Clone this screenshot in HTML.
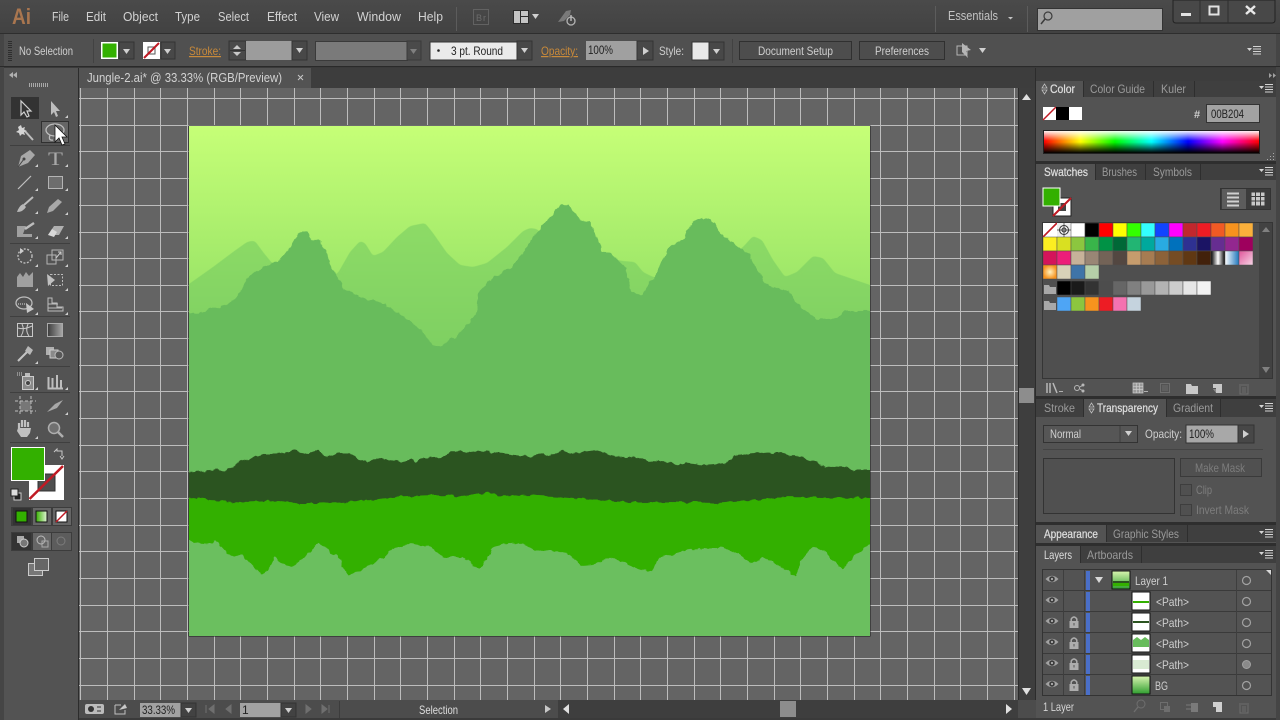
<!DOCTYPE html>
<html><head><meta charset="utf-8"><title>Illustrator</title>
<style>
html,body{margin:0;padding:0;width:1280px;height:720px;overflow:hidden;background:#535353}
svg{display:block;position:absolute;left:0;top:0}
text{font-family:"Liberation Sans",sans-serif;font-size:12px;fill:#cfcfcf}
.m{font-size:13px;fill:#d2d2d2}
.o{fill:#c98a3a;text-decoration:underline dotted}
.d{fill:#7d7d7d}
.k{fill:#222}
.i{fill:#9a9a9a}
.b{fill:#dedede;stroke:#dedede;stroke-width:.25}
.ic{fill:none;stroke:#bdbdbd;stroke-width:1.3}
.is{fill:#a8a8a8}
</style></head><body>
<svg width="1280" height="720" viewBox="0 0 1280 720" xmlns="http://www.w3.org/2000/svg">
<defs>
<clipPath id="ab"><rect x="189" y="126" width="681" height="510"/></clipPath>
<filter id="soft" x="170" y="100" width="730" height="560" filterUnits="userSpaceOnUse" color-interpolation-filters="sRGB"><feGaussianBlur stdDeviation="1.8"/><feComponentTransfer><feFuncA type="linear" slope="5" intercept="-2"/></feComponentTransfer><feGaussianBlur stdDeviation=".3"/></filter>
<filter id="rough" x="170" y="100" width="730" height="560" filterUnits="userSpaceOnUse" color-interpolation-filters="sRGB"><feGaussianBlur stdDeviation="1" result="b"/><feComponentTransfer in="b" result="g"><feFuncA type="linear" slope="5" intercept="-2"/></feComponentTransfer><feTurbulence type="fractalNoise" baseFrequency=".14" numOctaves="2" seed="4" result="n"/><feDisplacementMap in="g" in2="n" scale="5" xChannelSelector="R" yChannelSelector="G"/><feGaussianBlur stdDeviation=".35"/></filter>
<linearGradient id="sky" x1="0" y1="0" x2="0" y2="1"><stop offset="0" stop-color="#c6ff77"/><stop offset="1" stop-color="#8cdc62"/></linearGradient>
<linearGradient id="far" x1="0" y1="0" x2="0" y2="1"><stop offset="0" stop-color="#8ddb66"/><stop offset="1" stop-color="#78cb60"/></linearGradient>
<linearGradient id="hue" x1="0" y1="0" x2="1" y2="0"><stop offset="0" stop-color="#f00"/><stop offset=".17" stop-color="#ff0"/><stop offset=".33" stop-color="#0f0"/><stop offset=".5" stop-color="#0ff"/><stop offset=".67" stop-color="#00f"/><stop offset=".83" stop-color="#f0f"/><stop offset="1" stop-color="#f00"/></linearGradient>
<linearGradient id="lum" x1="0" y1="0" x2="0" y2="1"><stop offset="0" stop-color="#fff" stop-opacity=".95"/><stop offset=".45" stop-color="#fff" stop-opacity="0"/><stop offset=".5" stop-color="#000" stop-opacity="0"/><stop offset="1" stop-color="#000" stop-opacity="1"/></linearGradient>
<linearGradient id="top" x1="0" y1="0" x2="0" y2="1"><stop offset="0" stop-color="#4a4a4a"/><stop offset="1" stop-color="#424242"/></linearGradient>
<linearGradient id="bw" x1="0" y1="0" x2="1" y2="0"><stop offset="0" stop-color="#000"/><stop offset=".5" stop-color="#fff"/><stop offset="1" stop-color="#000"/></linearGradient>
<linearGradient id="bl" x1="0" y1="0" x2="1" y2="0"><stop offset="0" stop-color="#fff"/><stop offset="1" stop-color="#1d75bc"/></linearGradient>
<linearGradient id="pk" x1="0" y1="0" x2="1" y2="1"><stop offset="0" stop-color="#e0559a"/><stop offset="1" stop-color="#f6d6e6"/></linearGradient>
<linearGradient id="gr" x1="0" y1="0" x2="0" y2="1"><stop offset="0" stop-color="#d9f5b0"/><stop offset="1" stop-color="#2f9e2f"/></linearGradient>
<linearGradient id="gg" x1="0" y1="0" x2="1" y2="0"><stop offset="0" stop-color="#36b000"/><stop offset="1" stop-color="#e4f5d8"/></linearGradient>
<linearGradient id="gy" x1="0" y1="0" x2="1" y2="0"><stop offset="0" stop-color="#3c3c3c"/><stop offset="1" stop-color="#a8a8a8"/></linearGradient>
<radialGradient id="org"><stop offset="0" stop-color="#fff2c0"/><stop offset="1" stop-color="#f7931e"/></radialGradient>
<path id="tri" d="M0 3 L3 3 L3 0 Z" fill="#cfcfcf"/>
<path id="dn" d="M0 0 H7 L3.5 5 Z" fill="#d0d0d0"/>
<path id="menu" d="M0 3 H5 L2.5 6 Z M6 1 H14 V2 H6 Z M6 3.5 H14 V4.5 H6 Z M6 6 H14 V7 H6 Z M6 8.5 H14 V9.5 H6 Z" fill="#d4d4d4" transform="translate(0,-1)"/>
<g id="eye"><path d="M-6.500 0 Q0 -6.500 6.500 0 Q0 6.500 -6.500 0 Z" fill="#a2a2a2"/><circle r="2.800" fill="#3d3d3d"/><circle r="1" fill="#c4c4c4"/></g>
<g id="lock"><path d="M-2.800 -1 V-3 Q0 -7 2.800 -3 V-1" fill="none" stroke="#adadad" stroke-width="1.500"/><rect x="-4.500" y="-1" width="9" height="7" fill="#adadad"/><rect x="-.5" y="1" width="1" height="2.500" fill="#555"/></g>
<circle id="tgt" r="4" fill="none" stroke="#a2a2a2" stroke-width="1.2"/>
</defs>

<!-- base -->
<rect width="1280" height="720" fill="#535353"/>
<rect width="1280" height="33" fill="url(#top)"/>
<rect y="33" width="1280" height="1" fill="#2e2e2e"/>
<rect x="4" y="34" width="1272" height="32" fill="#505050"/>
<rect y="34" width="4" height="686" fill="#454545"/>
<rect x="1276" y="34" width="4" height="686" fill="#454545"/>
<rect x="0" y="66" width="1280" height="1" fill="#2a2a2a"/>
<rect x="4" y="67" width="1272" height="1" fill="#3a3a3a"/>

<!-- menu bar -->
<text x="12" y="24" textLength="19" lengthAdjust="spacingAndGlyphs" style="font-size:22px;font-weight:bold;fill:#a9764f">Ai</text>
<text class="m" x="52" y="21" textLength="17" lengthAdjust="spacingAndGlyphs">File</text>
<text class="m" x="86" y="21" textLength="20" lengthAdjust="spacingAndGlyphs">Edit</text>
<text class="m" x="123" y="21" textLength="35" lengthAdjust="spacingAndGlyphs">Object</text>
<text class="m" x="175" y="21" textLength="25" lengthAdjust="spacingAndGlyphs">Type</text>
<text class="m" x="218" y="21" textLength="31" lengthAdjust="spacingAndGlyphs">Select</text>
<text class="m" x="267" y="21" textLength="30" lengthAdjust="spacingAndGlyphs">Effect</text>
<text class="m" x="314" y="21" textLength="25" lengthAdjust="spacingAndGlyphs">View</text>
<text class="m" x="357" y="21" textLength="44" lengthAdjust="spacingAndGlyphs">Window</text>
<text class="m" x="418" y="21" textLength="25" lengthAdjust="spacingAndGlyphs">Help</text>
<rect x="456" y="7" width="1" height="24" fill="#5c5c5c"/>
<rect x="473.500" y="9.500" width="15" height="15" fill="none" stroke="#626262"/>
<text x="476" y="21" textLength="10" style="font-size:9px;fill:#6c6c6c">Br</text>
<rect x="513" y="10" width="16" height="14" fill="#2c2c2c"/><rect x="514" y="11" width="6" height="12" fill="#c4c4c4"/><rect x="521" y="11" width="7" height="5" fill="#c4c4c4"/><rect x="521" y="17" width="7" height="6" fill="#c4c4c4"/>
<use href="#dn" x="532" y="14"/>
<path d="M558 22 L566 11 L571 10 L570 15 L564 21 Z" fill="#7a7a7a"/>
<circle cx="571" cy="21" r="4" fill="none" stroke="#b4b4b4" stroke-width="1.3"/><path d="M571 15 V21" stroke="#c4c4c4" stroke-width="1.3"/>
<rect x="935" y="6" width="1" height="26" fill="#5c5c5c"/>
<text x="948" y="20" textLength="50" lengthAdjust="spacingAndGlyphs" style="font-size:13px;fill:#c4c4c4">Essentials</text>
<path d="M1008 17 h5 l-2.500 2.500 Z" fill="#c4c4c4"/>
<rect x="1027" y="6" width="1" height="26" fill="#5c5c5c"/>
<rect x="1037.500" y="8.500" width="125" height="22" fill="#a0a0a0" stroke="#333"/>
<circle cx="1048" cy="16" r="4" fill="none" stroke="#3c3c3c" stroke-width="1.200"/><path d="M1045 19 L1041 24" stroke="#3c3c3c" stroke-width="1.500"/>
<path d="M1173 0 V20 Q1173 23 1176 23 H1272 Q1275 23 1275 20 V0 Z" fill="#484848" stroke="#222"/>
<path d="M1200 0 V23 M1228 0 V23" stroke="#2e2e2e"/>
<rect x="1181" y="13" width="10" height="3" fill="#e2e2e2"/>
<rect x="1209.500" y="6.500" width="9" height="8" fill="none" stroke="#e2e2e2" stroke-width="2"/>
<path d="M1246 6 L1255 14 M1255 6 L1246 14" stroke="#e8e8e8" stroke-width="2.500"/>

<!-- control bar -->
<g fill="#2e2e2e"><rect x="8" y="41" width="4" height="1"/><rect x="8" y="43" width="4" height="1"/><rect x="8" y="45" width="4" height="1"/><rect x="8" y="47" width="4" height="1"/><rect x="8" y="50" width="4" height="1"/><rect x="8" y="52" width="4" height="1"/><rect x="8" y="54" width="4" height="1"/><rect x="8" y="56" width="4" height="1"/><rect x="8" y="58" width="4" height="1"/><rect x="8" y="60" width="4" height="1"/></g>
<text x="19" y="55" textLength="54" lengthAdjust="spacingAndGlyphs">No Selection</text>
<rect x="93" y="39" width="1" height="24" fill="#424242"/>
<rect x="101" y="42" width="17" height="17" fill="#fff"/><rect x="102.500" y="43.500" width="14" height="14" fill="#33b000"/>
<rect x="119" y="42" width="15" height="17" fill="#484848" stroke="#333"/><use href="#dn" x="123" y="49"/>
<rect x="143" y="42" width="17" height="17" fill="#fff"/><rect x="148" y="47" width="7" height="7" fill="none" stroke="#555"/><path d="M144 58 L159 43" stroke="#c01a24" stroke-width="2"/>
<rect x="161" y="42" width="14" height="17" fill="#484848" stroke="#333"/><use href="#dn" x="164" y="49"/>
<text class="o" x="189" y="55" textLength="32" lengthAdjust="spacingAndGlyphs">Stroke:</text>
<rect x="229" y="41" width="17" height="19" fill="#4a4a4a" stroke="#333"/><path d="M233 49 h8 l-4 -4 Z M233 52 h8 l-4 4 Z" fill="#c8c8c8"/><rect x="230" y="50" width="15" height="1" fill="#333"/>
<rect x="246" y="41" width="46" height="19" fill="#9c9c9c"/>
<rect x="292" y="41" width="15" height="19" fill="#484848" stroke="#333"/><use href="#dn" x="296" y="48"/>
<rect x="315.500" y="41.500" width="92" height="19" fill="#7a7a7a" stroke="#3a3a3a"/>
<rect x="407" y="41" width="14" height="19" fill="#4a4a4a" stroke="#3a3a3a"/><use href="#dn" x="410" y="49" opacity=".4"/>
<rect x="430" y="42" width="87" height="18" fill="#eaeaea" stroke="#333"/>
<circle cx="438.500" cy="50.500" r="1.300" fill="#222"/>
<text x="451" y="55" textLength="52" lengthAdjust="spacingAndGlyphs" class="k">3 pt. Round</text>
<rect x="517" y="41" width="15" height="19" fill="#484848" stroke="#333"/><use href="#dn" x="521" y="48"/>
<text class="o" x="541" y="55" textLength="37" lengthAdjust="spacingAndGlyphs">Opacity:</text>
<rect x="586" y="41" width="51" height="19" fill="#a0a0a0"/>
<text x="588" y="54" textLength="25" lengthAdjust="spacingAndGlyphs" class="k">100%</text>
<rect x="637" y="41" width="16" height="19" fill="#484848" stroke="#333"/><path d="M643 47 L649 51 L643 55 Z" fill="#d0d0d0"/>
<text x="659" y="55" textLength="25" lengthAdjust="spacingAndGlyphs">Style:</text>
<rect x="692" y="42" width="17" height="18" fill="#e9e9e9" stroke="#333"/>
<rect x="709" y="42" width="15" height="18" fill="#484848" stroke="#333"/><use href="#dn" x="713" y="49"/>
<rect x="732" y="39" width="1" height="24" fill="#424242"/>
<rect x="739.500" y="41.500" width="112" height="18" fill="#4d4d4d" stroke="#303030"/>
<text x="758" y="55" textLength="75" lengthAdjust="spacingAndGlyphs">Document Setup</text>
<rect x="859.500" y="41.500" width="85" height="18" fill="#4d4d4d" stroke="#303030"/>
<text x="875" y="55" textLength="54" lengthAdjust="spacingAndGlyphs">Preferences</text>
<rect x="957" y="46" width="10" height="9" fill="none" stroke="#b5b5b5"/><path d="M962 43 L971 50 L966 51 L968 58 L962 52 Z" fill="#b5b5b5"/>
<use href="#dn" x="979" y="48"/>
<use href="#menu" x="1247" y="46"/>

<!-- tab bar -->
<rect x="4" y="68" width="1032" height="20" fill="#3d3d3d"/>
<rect x="4" y="68" width="74" height="20" fill="#535353"/>
<path d="M9 72 L13 75 L9 78 Z M13 72 L17 75 L13 78 Z" fill="#b0b0b0" transform="matrix(-1 0 0 1 26 0)"/>
<g fill="#a8a8a8"><rect x="29" y="83" width="1" height="4"/><rect x="31" y="83" width="1" height="4"/><rect x="33" y="83" width="1" height="4"/><rect x="35" y="83" width="1" height="4"/><rect x="37" y="83" width="1" height="4"/><rect x="39" y="83" width="1" height="4"/><rect x="41" y="83" width="1" height="4"/><rect x="43" y="83" width="1" height="4"/><rect x="45" y="83" width="1" height="4"/><rect x="47" y="83" width="1" height="4"/></g>
<rect x="78" y="68" width="1" height="652" fill="#2c2c2c"/>
<rect x="79" y="68" width="232" height="20" fill="#535353"/>
<text class="m" x="87" y="82" textLength="195" lengthAdjust="spacingAndGlyphs">Jungle-2.ai* @ 33.33% (RGB/Preview)</text>
<path d="M298 75 L303 80 M303 75 L298 80" stroke="#c8c8c8"/>

<!-- canvas -->
<rect x="79" y="88" width="939" height="612" fill="#646464"/>
<path stroke="#bdbdbd" stroke-width="1" fill="none" d="M80.500 88V700M107.500 88V700M134.500 88V700M160.500 88V700M187.500 88V700M214.500 88V700M240.500 88V700M267.500 88V700M294.500 88V700M320.500 88V700M347.500 88V700M374.500 88V700M400.500 88V700M427.500 88V700M454.500 88V700M480.500 88V700M507.500 88V700M534.500 88V700M560.500 88V700M587.500 88V700M614.500 88V700M640.500 88V700M667.500 88V700M694.500 88V700M720.500 88V700M747.500 88V700M774.500 88V700M800.500 88V700M827.500 88V700M854.500 88V700M880.500 88V700M907.500 88V700M934.500 88V700M960.500 88V700M987.500 88V700M1014.500 88V700
M79 98.500H1018M79 125.500H1018M79 151.500H1018M79 178.500H1018M79 205.500H1018M79 232.500H1018M79 258.500H1018M79 285.500H1018M79 311.500H1018M79 338.500H1018M79 365.500H1018M79 391.500H1018M79 418.500H1018M79 445.500H1018M79 471.500H1018M79 498.500H1018M79 525.500H1018M79 551.500H1018M79 578.500H1018M79 605.500H1018M79 631.500H1018M79 658.500H1018M79 685.500H1018"/>

<!-- artboard -->
<rect x="188.500" y="125.500" width="682" height="511" fill="#1a1a1a"/>
<rect x="189" y="126" width="681" height="510" fill="#6bbf5f"/>
<rect x="189" y="126" width="681" height="224" fill="url(#sky)"/>
<g clip-path="url(#ab)">
<polygon filter="url(#soft)" fill="url(#far)" points="175,294 189,284 213,267 233,252 247,242 251,241 255,241 263,252 272,263 300,290 338,273 350,252 360,241 365,243 373,256 383,252 397,237 410,226 425,223 433,233 447,253 460,265 473,267 487,263 507,247 523,231 530,228 537,229 560,250 623,261 635,262 643,272 653,277 700,280 743,247 753,236 762,240 773,260 785,277 797,272 813,256 823,258 835,273 870,285 885,290 885,400 175,400"/>
<polygon filter="url(#rough)" fill="#68bc5c" points="175,311 189,312 197,314 207,310 220,307 230,303 238,296 247,279 253,273 268,265 280,260 290,247 298,233 307,231 313,240 320,241 327,253 330,265 343,287 360,297 380,303 397,312 413,323 423,332 432,344 442,346 450,339 457,337 467,325 477,313 478,293 495,276 513,265 530,242 540,228 550,217 561,204 563,203 565,206 567,203 580,220 590,223 597,237 603,253 610,253 625,267 632,292 642,296 648,285 657,273 670,246 683,239 692,222 703,217 715,223 720,233 737,245 750,255 757,270 767,285 790,292 797,303 808,313 817,319 837,318 845,311 870,311 885,311 885,500 175,500"/>
<polygon filter="url(#rough)" fill="#2b5420" points="175,472 189,472 200,471 220,470 223,472 238,463 248,459 262,454 277,454 293,450 305,453 318,450 327,457 337,453 350,453 360,461 377,459 400,462 410,459 415,463 423,458 443,457 453,451 467,453 482,451 500,453 530,457 542,453 550,456 562,450 570,453 592,450 610,455 622,457 637,457 650,461 670,462 678,466 685,463 703,465 727,463 733,456 750,454 767,452 780,453 797,456 817,463 825,466 845,467 855,470 870,470 885,470 885,510 175,510"/>
<polygon filter="url(#rough)" fill="#33b000" points="175,498 189,498 198,497 210,500 240,502 280,501 300,503 320,503 360,501 397,497 447,495 463,497 488,492 497,496 530,495 563,497 608,501 627,502 673,502 717,503 750,501 777,497 870,498 885,498 885,538 870,544 855,555 842,569 825,552 813,547 803,557 795,576 775,563 763,557 753,564 740,555 722,547 710,548 680,551 673,555 658,557 653,570 647,572 627,564 610,557 593,565 582,566 570,555 550,550 537,552 530,548 517,542 493,547 480,570 463,557 443,557 430,547 410,544 393,548 388,555 367,567 348,576 337,555 330,555 328,548 318,544 308,553 292,567 280,563 275,556 270,568 262,576 252,565 242,554 233,557 227,553 215,539 213,544 197,543 189,541 175,540"/>
</g>

<!-- vertical scrollbar -->
<rect x="1018" y="88" width="18" height="612" fill="#3e3e3e"/>
<rect x="1018" y="88" width="1" height="612" fill="#2c2c2c"/>
<path d="M1022 100 H1031 L1026.500 94 Z" fill="#e0e0e0"/><path d="M1022 688 H1031 L1026.500 695 Z" fill="#e0e0e0"/>
<rect x="1019" y="388" width="15" height="15" fill="#8d8d8d"/>
<rect x="1035" y="68" width="1" height="652" fill="#2c2c2c"/>

<!-- status bar -->
<rect x="79" y="700" width="957" height="18" fill="#4c4c4c"/>
<rect x="79" y="718" width="1197" height="2" fill="#3a3a3a"/>
<rect x="85" y="704" width="19" height="10" rx="2" fill="#bbb"/><circle cx="91" cy="709" r="3" fill="#333"/><path d="M97 707 h4 M101 711 h-4" stroke="#333"/>
<path d="M115 705 h6 M115 705 V714 H125 V710" fill="none" stroke="#c0c0c0"/><path d="M119 710 L125 704 L127 708 Z" fill="#c8c8c8"/>
<rect x="140" y="703" width="41" height="14" fill="#a2a2a2"/>
<text x="142" y="714" textLength="33" lengthAdjust="spacingAndGlyphs" class="k">33.33%</text>
<rect x="181" y="703" width="15" height="14" fill="#424242" stroke="#333"/><use href="#dn" x="185" y="708"/>
<path d="M206 705 V713 M214 705 L209 709 L214 713 Z M231 705 L226 709 L231 713 Z" stroke="#6f6f6f" fill="#6f6f6f"/>
<rect x="240" y="703" width="41" height="14" fill="#a2a2a2"/>
<text x="242" y="714" class="k">1</text>
<rect x="281" y="703" width="15" height="14" fill="#424242" stroke="#333"/><use href="#dn" x="285" y="708"/>
<path d="M306 705 L311 709 L306 713 Z M322 705 L327 709 L322 713 Z M329 705 V713" stroke="#6f6f6f" fill="#6f6f6f"/>
<rect x="339" y="701" width="1" height="17" fill="#3c3c3c"/>
<text x="419" y="714" textLength="39" lengthAdjust="spacingAndGlyphs" style="fill:#dedede">Selection</text>
<path d="M545 705 L551 709 L545 713 Z" fill="#c8c8c8"/>
<rect x="558" y="700" width="460" height="18" fill="#3e3e3e"/>
<path d="M569 704 L563 709 L569 714 Z" fill="#e0e0e0"/><path d="M1006 704 L1012 709 L1006 714 Z" fill="#e0e0e0"/>
<rect x="780" y="701" width="16" height="16" fill="#8d8d8d"/>

<!-- toolbox -->
<rect x="11" y="97" width="28" height="22" fill="#333"/>
<rect x="41.500" y="121.500" width="27" height="21" fill="#666" stroke="#303030"/>
<path d="M10 145.500 H70 M10 243.500 H70 M10 316.500 H70 M10 366.500 H70 M10 392.500 H70 M10 442.500 H70" stroke="#3f3f3f"/>
<path d="M21 101 V115 L24 112 L27 117 L29 116 L27 111 L31 111 Z" fill="none" stroke="#d0d0d0" stroke-width="1.200"/>
<path d="M51 101 V115 L54 112 L56 117 L58 116 L56 111 L60 111 Z" fill="#bdbdbd"/>
<use href="#tri" x="65" y="115"/>
<path d="M24 130 L33 140" stroke="#bdbdbd" stroke-width="2"/><path d="M21 125 L22 128 L25 127 L24 130 L27 131 L24 132 L25 135 L22 134 L20 136 L19 133 L16 132 L19 130 L18 127 Z" fill="#d4d4d4"/>
<ellipse cx="55" cy="130" rx="9" ry="6" class="ic"/><path d="M50 135 Q48 141 53 140" class="ic"/>
<path d="M18 167 L21 156 L30 150 L35 155 L28 163 Z" fill="#a8a8a8"/><circle cx="24" cy="159" r="1.500" fill="#444"/><path d="M18 167 L24 159" stroke="#444"/><use href="#tri" x="35" y="164"/>
<text x="48" y="165" textLength="15" lengthAdjust="spacingAndGlyphs" style="font-family:'Liberation Serif',serif;font-size:19px;fill:#a8a8a8">T</text><use href="#tri" x="65" y="164"/>
<path d="M18 189 L31 176" stroke="#c0c0c0" stroke-width="1.200"/><use href="#tri" x="35" y="188"/>
<rect x="48.500" y="176.500" width="14" height="12" fill="#6d6d6d" stroke="#b4b4b4"/><use href="#tri" x="65" y="188"/>
<path d="M24 205 L33 197" stroke="#bdbdbd" stroke-width="2"/><path d="M17 212 Q19 206 23 204 L26 207 Q23 212 17 212 Z" fill="#b8b8b8"/><use href="#tri" x="35" y="211"/>
<path d="M47 213 L49 207 L58 199 L62 202 L53 211 Z" fill="#a8a8a8"/><use href="#tri" x="65" y="212"/>
<path d="M17 226 H26 L23 234 H32 V237 H17 Z" fill="#a0a0a0"/><path d="M25 229 L34 223" stroke="#bdbdbd" stroke-width="2.500"/><use href="#tri" x="35" y="236"/>
<path d="M48 235 L54 226 H64 L59 235 Z" fill="#b0b0b0"/><path d="M48 235 L52 229 L57 232 L54 237 Z" fill="#d8d8d8"/><use href="#tri" x="65" y="236"/>
<circle cx="25" cy="256" r="7" fill="none" stroke="#bdbdbd" stroke-width="1.400" stroke-dasharray="2 1.500"/><path d="M20 248 L24 251 L20 254 Z" fill="#ccc"/><use href="#tri" x="35" y="264"/>
<rect x="47" y="255" width="9" height="9" fill="none" stroke="#b4b4b4"/><rect x="52" y="250" width="11" height="10" fill="none" stroke="#b4b4b4"/><path d="M56 258 L61 252 M58 252 H61 V255" stroke="#ccc" fill="none"/><use href="#tri" x="65" y="264"/>
<path d="M17 287 V277 L20 273 L23 277 L26 272 L29 276 L33 272 V287 Z" fill="#a0a0a0"/><use href="#tri" x="35" y="288"/>
<rect x="50.500" y="274.500" width="12" height="11" fill="none" stroke="#bdbdbd" stroke-dasharray="2 1.500"/><path d="M47 274 L55 280 L48 286 Z" fill="#c0c0c0"/><use href="#tri" x="65" y="288"/>
<ellipse cx="24" cy="303" rx="8" ry="6" class="ic"/><path d="M18 304 H28" stroke="#ddd" stroke-dasharray="1 1"/><path d="M26 303 L34 309 L27 313 Z" fill="#c8c8c8"/><use href="#tri" x="35" y="312"/>
<path d="M48 298 H52 V303 H57 V307 H63 V311 H48 Z" fill="none" stroke="#bdbdbd"/><path d="M48 304 H58 M48 308 H62" stroke="#bdbdbd"/><use href="#tri" x="65" y="312"/>
<rect x="17.500" y="323.500" width="15" height="13" fill="none" stroke="#c8c8c8"/><path d="M18 328 Q24 330 32 326 M22 324 Q25 330 21 336 M28 324 Q25 331 29 336" stroke="#c8c8c8" fill="none"/>
<rect x="47.500" y="323.500" width="15" height="13" fill="url(#gy)" stroke="#aaa"/>
<path d="M18 361 L28 351" stroke="#c4c4c4" stroke-width="2"/><path d="M28 346 L33 350 L30 355 L25 351 Z" fill="#b8b8b8"/><use href="#tri" x="35" y="361"/>
<rect x="46" y="347" width="8" height="8" fill="#b0b0b0"/><rect x="50" y="350" width="8" height="8" fill="#8a8a8a" stroke="#ccc"/><circle cx="59" cy="355" r="4" fill="#585858" stroke="#bbb"/>
<rect x="22.500" y="376.500" width="11" height="13" fill="#8a8a8a" stroke="#ccc"/><circle cx="28" cy="383" r="2.500" fill="#444" stroke="#ccc"/><rect x="25" y="373" width="5" height="3" fill="#bbb"/><path d="M17 373 h6 M17 375 h6" stroke="#ccc" stroke-dasharray="1 1"/><use href="#tri" x="35" y="387"/>
<path d="M48.500 377 V388.500 H63 M52.500 388 V378 M57 388 V375 M61 388 V380" fill="none" stroke="#bdbdbd" stroke-width="2"/><use href="#tri" x="65" y="387"/>
<rect x="20" y="401" width="11" height="10" fill="#777"/><path d="M15 401 H36 M15 411 H36 M20 396 V416 M31 396 V416" stroke="#bdbdbd" stroke-dasharray="3 2"/>
<path d="M47 412 L55 404 L63 400 L57 408 Z" fill="#a8a8a8"/><use href="#tri" x="65" y="412"/>
<path d="M19 428 V423 M22 427 V420 M25 427 V420 M28 427 V422" stroke="#c0c0c0" stroke-width="2.200"/><path d="M18 428 H31 L30 433 L27 437 H21 L17 431 Z" fill="#c0c0c0"/><use href="#tri" x="35" y="436"/>
<circle cx="54" cy="428" r="5.500" fill="#707070" stroke="#aeaeae" stroke-width="1.500"/><path d="M58 432 L63 437" stroke="#aeaeae" stroke-width="2.500"/>
<path d="M55 125 L55 142 L59 138 L62 145 L65 144 L62 137 L67 137 Z" fill="#fff" stroke="#111" stroke-width=".8"/>
<rect x="29" y="465" width="35" height="35" fill="#fff"/>
<rect x="38" y="474" width="17" height="17" fill="#4e4e4e" stroke="#333"/>
<path d="M29.500 499 L63 466" stroke="#c01a24" stroke-width="2.500"/>
<rect x="11" y="447" width="34" height="34" fill="#fff"/><rect x="12" y="448" width="32" height="32" fill="#33b000"/>
<path d="M54 452 L57 449 V451 H62 V456 M60 456 L62 459 L64 456" fill="none" stroke="#c8c8c8"/>
<rect x="14" y="493" width="7" height="7" fill="#222" stroke="#ccc"/><rect x="11" y="489" width="7" height="7" fill="#ddd" stroke="#222"/>
<rect x="11" y="507" width="61" height="19" fill="#3c3c3c"/>
<rect x="13" y="508" width="18" height="17" fill="#333"/><rect x="16" y="511" width="11" height="11" fill="#33b000" stroke="#111"/>
<rect x="33" y="508" width="18" height="17" fill="#666"/><rect x="36" y="511" width="11" height="11" fill="url(#gg)" stroke="#111"/>
<rect x="53" y="508" width="18" height="17" fill="#666"/><rect x="56" y="511" width="11" height="11" fill="#fff" stroke="#111"/><path d="M56 522 L67 511" stroke="#c01a24" stroke-width="1.500"/>
<rect x="11" y="532" width="61" height="19" fill="#3c3c3c"/>
<rect x="12" y="533" width="19" height="17" fill="#333"/><rect x="33" y="533" width="18" height="17" fill="#666"/><rect x="52" y="533" width="19" height="17" fill="#5c5c5c"/>
<rect x="17" y="536" width="7" height="7" fill="#aaa"/><circle cx="24" cy="543" r="4" fill="#777" stroke="#ccc"/>
<circle cx="41" cy="540" r="4" fill="#666" stroke="#bbb"/><rect x="42" y="541" width="6" height="6" fill="none" stroke="#aaa"/>
<circle cx="61" cy="541" r="4" fill="none" stroke="#7c7c7c"/>
<rect x="28.500" y="563.500" width="14" height="12" fill="#777" stroke="#ccc"/><rect x="34.500" y="558.500" width="14" height="12" fill="#666" stroke="#ccc"/>

<!-- right panels -->
<rect x="1036" y="68" width="240" height="13" fill="#3d3d3d"/>
<path d="M1269 73 L1272 75.500 L1269 78 Z M1273 73 L1276 75.500 L1273 78 Z" fill="#a0a0a0"/>
<rect x="1036" y="81" width="240" height="16" fill="#3f3f3f"/>
<rect x="1036" y="81" width="47" height="16" fill="#535353"/>
<path d="M1083.500 81 V97 M1153.500 81 V97 M1194.500 81 V97" stroke="#2e2e2e"/>
<path d="M1042 88 L1044.500 84 L1047 88 Z M1042 90 L1044.500 94 L1047 90 Z" fill="none" stroke="#c0c0c0" stroke-width=".8"/>
<text x="1050" y="93" textLength="25" lengthAdjust="spacingAndGlyphs" class="b">Color</text>
<text x="1090" y="93" textLength="55" lengthAdjust="spacingAndGlyphs" class="i">Color Guide</text>
<text x="1161" y="93" textLength="25" lengthAdjust="spacingAndGlyphs" class="i">Kuler</text>
<use href="#menu" x="1259" y="84"/>
<rect x="1043" y="107" width="13" height="13" fill="#fff"/><path d="M1043 120 L1056 107" stroke="#c01a24" stroke-width="1.500"/>
<rect x="1056" y="107" width="13" height="13" fill="#000"/><rect x="1069" y="107" width="13" height="13" fill="#fff"/>
<text x="1194" y="118" style="font-weight:bold;font-size:11px">#</text>
<rect x="1206.500" y="104.500" width="53" height="18" fill="#a2a2a2" stroke="#333"/>
<text x="1211" y="118" textLength="33" lengthAdjust="spacingAndGlyphs" class="k">00B204</text>
<rect x="1043" y="130" width="217" height="24" fill="#222"/>
<rect x="1044" y="131" width="215" height="22" fill="url(#hue)"/><rect x="1044" y="131" width="215" height="22" fill="url(#lum)"/>
<path d="M1274 153 v1 h-1 v-1 Z M1271 156 v1 h-1 v-1 Z M1274 156 v1 h-1 v-1 Z M1268 159 v1 h-1 v-1 Z M1271 159 v1 h-1 v-1 Z M1274 159 v1 h-1 v-1 Z" fill="#aaa"/>
<rect x="1036" y="161" width="240" height="3" fill="#2e2e2e"/>

<rect x="1036" y="164" width="240" height="16" fill="#3f3f3f"/>
<rect x="1036" y="164" width="59" height="16" fill="#535353"/>
<path d="M1095.500 164 V180 M1145.500 164 V180 M1200.500 164 V180" stroke="#2e2e2e"/>
<text x="1044" y="176" textLength="44" lengthAdjust="spacingAndGlyphs" class="b">Swatches</text>
<text x="1102" y="176" textLength="35" lengthAdjust="spacingAndGlyphs" class="i">Brushes</text>
<text x="1153" y="176" textLength="39" lengthAdjust="spacingAndGlyphs" class="i">Symbols</text>
<use href="#menu" x="1259" y="167"/>
<rect x="1053" y="198" width="18" height="18" fill="#fff" stroke="#222"/><rect x="1058" y="203" width="8" height="8" fill="#444"/><path d="M1053 216 L1071 198" stroke="#c01a24" stroke-width="2"/>
<rect x="1043" y="188" width="17" height="18" fill="#33b000" stroke="#fff"/>
<rect x="1220.500" y="188.500" width="50" height="21" fill="#3c3c3c" stroke="#333"/>
<rect x="1222" y="189" width="24" height="20" fill="#5c5c5c"/>
<path d="M1227 193.500 H1239 M1227 197.500 H1239 M1227 201.500 H1239 M1227 205.500 H1239" stroke="#d0d0d0" stroke-width="2"/>
<path d="M1251 192 H1265 V206 H1251 Z M1251 196.500 H1265 M1251 201 H1265 M1255.500 192 V206 M1260.500 192 V206" fill="#c8c8c8" stroke="#3c3c3c"/>

<rect x="1042.500" y="222.500" width="230" height="156" fill="#4f4f4f" stroke="#353535"/>
<rect x="1259" y="223" width="13" height="155" fill="#424242"/>
<path d="M1262 232 H1270 L1266 227 Z M1262 367 H1270 L1266 373 Z" fill="#808080"/>
<rect x="1043" y="223" width="14" height="14" fill="#fff"/><path d="M1043 237 L1057 223" stroke="#c01a24" stroke-width="1.600"/>
<rect x="1057" y="223" width="14" height="14" fill="#eee"/><circle cx="1064" cy="230" r="4.500" fill="none" stroke="#333"/><circle cx="1064" cy="230" r="2" fill="none" stroke="#333"/><path d="M1057 230 H1071 M1064 223 V237" stroke="#333" stroke-width=".7"/>
<g stroke="#4f4f4f" stroke-width=".5">
<rect x="1071" y="223" width="14" height="14" fill="#fff"/><rect x="1085" y="223" width="14" height="14" fill="#000"/><rect x="1099" y="223" width="14" height="14" fill="#f00"/><rect x="1113" y="223" width="14" height="14" fill="#ff0"/><rect x="1127" y="223" width="14" height="14" fill="#3f0"/><rect x="1141" y="223" width="14" height="14" fill="#3ff"/><rect x="1155" y="223" width="14" height="14" fill="#14f"/><rect x="1169" y="223" width="14" height="14" fill="#f0f"/><rect x="1183" y="223" width="14" height="14" fill="#c1272d"/><rect x="1197" y="223" width="14" height="14" fill="#ed1c24"/><rect x="1211" y="223" width="14" height="14" fill="#f15a24"/><rect x="1225" y="223" width="14" height="14" fill="#f7931e"/><rect x="1239" y="223" width="14" height="14" fill="#fbb03b"/>
<rect x="1043" y="237" width="14" height="14" fill="#fcee21"/><rect x="1057" y="237" width="14" height="14" fill="#d9e021"/><rect x="1071" y="237" width="14" height="14" fill="#8cc63f"/><rect x="1085" y="237" width="14" height="14" fill="#39b54a"/><rect x="1099" y="237" width="14" height="14" fill="#009245"/><rect x="1113" y="237" width="14" height="14" fill="#006837"/><rect x="1127" y="237" width="14" height="14" fill="#22b573"/><rect x="1141" y="237" width="14" height="14" fill="#00a99d"/><rect x="1155" y="237" width="14" height="14" fill="#29abe2"/><rect x="1169" y="237" width="14" height="14" fill="#0071bc"/><rect x="1183" y="237" width="14" height="14" fill="#2e3192"/><rect x="1197" y="237" width="14" height="14" fill="#1b1464"/><rect x="1211" y="237" width="14" height="14" fill="#662d91"/><rect x="1225" y="237" width="14" height="14" fill="#93278f"/><rect x="1239" y="237" width="14" height="14" fill="#9e005d"/>
<rect x="1043" y="251" width="14" height="14" fill="#d4145a"/><rect x="1057" y="251" width="14" height="14" fill="#ed1e79"/><rect x="1071" y="251" width="14" height="14" fill="#c7b299"/><rect x="1085" y="251" width="14" height="14" fill="#998675"/><rect x="1099" y="251" width="14" height="14" fill="#736357"/><rect x="1113" y="251" width="14" height="14" fill="#534741"/><rect x="1127" y="251" width="14" height="14" fill="#c69c6d"/><rect x="1141" y="251" width="14" height="14" fill="#a67c52"/><rect x="1155" y="251" width="14" height="14" fill="#8c6239"/><rect x="1169" y="251" width="14" height="14" fill="#754c24"/><rect x="1183" y="251" width="14" height="14" fill="#603813"/><rect x="1197" y="251" width="14" height="14" fill="#42210b"/><rect x="1211" y="251" width="14" height="14" fill="url(#bw)"/><rect x="1225" y="251" width="14" height="14" fill="url(#bl)"/><rect x="1239" y="251" width="14" height="14" fill="url(#pk)"/>
<rect x="1043" y="265" width="14" height="14" fill="url(#org)"/><rect x="1057" y="265" width="14" height="14" fill="#d8d2b8"/><rect x="1071" y="265" width="14" height="14" fill="#3f74a8"/><rect x="1085" y="265" width="14" height="14" fill="#b5cfa8"/>
<rect x="1057" y="281" width="14" height="14" fill="#000"/><rect x="1071" y="281" width="14" height="14" fill="#1a1a1a"/><rect x="1085" y="281" width="14" height="14" fill="#333"/><rect x="1099" y="281" width="14" height="14" fill="#4d4d4d"/><rect x="1113" y="281" width="14" height="14" fill="#666"/><rect x="1127" y="281" width="14" height="14" fill="#808080"/><rect x="1141" y="281" width="14" height="14" fill="#999"/><rect x="1155" y="281" width="14" height="14" fill="#b3b3b3"/><rect x="1169" y="281" width="14" height="14" fill="#ccc"/><rect x="1183" y="281" width="14" height="14" fill="#e6e6e6"/><rect x="1197" y="281" width="14" height="14" fill="#f2f2f2"/>
<rect x="1057" y="297" width="14" height="14" fill="#4ea5f5"/><rect x="1071" y="297" width="14" height="14" fill="#8cc63f"/><rect x="1085" y="297" width="14" height="14" fill="#f7931e"/><rect x="1099" y="297" width="14" height="14" fill="#ed1c24"/><rect x="1113" y="297" width="14" height="14" fill="#f472b0"/><rect x="1127" y="297" width="14" height="14" fill="#c5d3de"/>
</g>
<path d="M1044 285 H1049 L1050 287 H1056 V294 H1044 Z M1044 301 H1049 L1050 303 H1056 V310 H1044 Z" fill="#a8a8a8"/>

<!-- swatch footer -->
<path d="M1047 383 V393 M1050 383 V393 M1053 383 L1057 393" stroke="#b8b8b8" stroke-width="1.500" fill="none"/><rect x="1059" y="391" width="4" height="1" fill="#b0b0b0"/>
<circle cx="1083" cy="385" r="1.500" fill="#b8b8b8"/><circle cx="1083" cy="391" r="1.500" fill="#b8b8b8"/><circle cx="1077" cy="388" r="2.500" fill="none" stroke="#b8b8b8"/><path d="M1080 387 L1083 385 M1080 389 L1083 391" stroke="#b8b8b8"/>
<path d="M1133 383 H1143 V393 H1133 Z M1136.300 383 V393 M1139.600 383 V393 M1133 386.300 H1143 M1133 389.600 H1143" fill="#999" stroke="#ccc" stroke-width=".7"/><rect x="1144" y="391" width="4" height="1" fill="#b0b0b0"/>
<rect x="1160.500" y="383.500" width="9" height="9" fill="none" stroke="#6e6e6e"/><path d="M1162 386 H1168 M1162 388 H1168 M1162 390 H1168" stroke="#6e6e6e"/>
<path d="M1186 384 H1191 L1192 386 H1198 V394 H1186 Z" fill="#c8c8c8"/>
<path d="M1213 384 H1222 V393 H1216 V388 H1213 Z" fill="#c8c8c8"/><path d="M1213 389 L1216 393 V389 Z" fill="#888"/>
<path d="M1239 385 H1249 M1240 386 V394 H1248 V386 M1243 387 V393 M1245 387 V393" stroke="#6e6e6e" fill="none"/>
<rect x="1036" y="396" width="240" height="3" fill="#2e2e2e"/>

<!-- transparency -->
<rect x="1036" y="399" width="240" height="18" fill="#3f3f3f"/>
<rect x="1084" y="399" width="82" height="18" fill="#535353"/>
<path d="M1083.500 399 V417 M1166.500 399 V417 M1220.500 399 V417" stroke="#2e2e2e"/>
<text x="1044" y="412" textLength="31" lengthAdjust="spacingAndGlyphs" class="i">Stroke</text>
<path d="M1089 407 L1091.500 403 L1094 407 Z M1089 409 L1091.500 413 L1094 409 Z" fill="none" stroke="#c0c0c0" stroke-width=".8"/>
<text x="1097" y="412" textLength="61" lengthAdjust="spacingAndGlyphs" class="b">Transparency</text>
<text x="1173" y="412" textLength="40" lengthAdjust="spacingAndGlyphs" class="i">Gradient</text>
<use href="#menu" x="1259" y="403"/>
<rect x="1043.500" y="425.500" width="94" height="17" fill="#565656" stroke="#333"/><path d="M1120 426 V442" stroke="#3f3f3f"/>
<text x="1050" y="438" textLength="31" lengthAdjust="spacingAndGlyphs" style="fill:#d0d0d0">Normal</text>
<use href="#dn" x="1125" y="431"/>
<text x="1145" y="438" textLength="37" lengthAdjust="spacingAndGlyphs">Opacity:</text>
<rect x="1186" y="425" width="52" height="18" fill="#a8a8a8" stroke="#333"/>
<text x="1189" y="438" textLength="25" lengthAdjust="spacingAndGlyphs" class="k">100%</text>
<rect x="1238" y="425" width="16" height="18" fill="#474747" stroke="#333"/><path d="M1243 430 L1249 434 L1243 438 Z" fill="#d0d0d0"/>
<rect x="1043" y="449" width="220" height="1" fill="#444"/>
<rect x="1043.500" y="458.500" width="131" height="55" fill="#505050" stroke="#333"/>
<rect x="1180.500" y="458.500" width="81" height="18" fill="#505050" stroke="#3a3a3a"/>
<text x="1195" y="472" textLength="50" lengthAdjust="spacingAndGlyphs" class="d">Make Mask</text>
<rect x="1180.500" y="484.500" width="11" height="11" fill="#505050" stroke="#3e3e3e"/><text x="1196" y="494" textLength="16" lengthAdjust="spacingAndGlyphs" class="d">Clip</text>
<rect x="1180.500" y="504.500" width="11" height="11" fill="#505050" stroke="#3e3e3e"/><text x="1196" y="514" textLength="53" lengthAdjust="spacingAndGlyphs" class="d">Invert Mask</text>
<rect x="1036" y="522" width="240" height="3" fill="#2e2e2e"/>

<!-- appearance -->
<rect x="1036" y="525" width="240" height="17" fill="#3f3f3f"/>
<rect x="1036" y="525" width="70" height="17" fill="#535353"/>
<path d="M1106.500 525 V542 M1187.500 525 V542" stroke="#2e2e2e"/>
<text x="1044" y="538" textLength="54" lengthAdjust="spacingAndGlyphs" class="b">Appearance</text>
<text x="1113" y="538" textLength="66" lengthAdjust="spacingAndGlyphs" class="i">Graphic Styles</text>
<use href="#menu" x="1259" y="529"/>
<rect x="1036" y="543" width="240" height="3" fill="#2e2e2e"/>

<!-- layers -->
<rect x="1036" y="546" width="240" height="17" fill="#3f3f3f"/>
<rect x="1036" y="546" width="44" height="17" fill="#535353"/>
<path d="M1080.500 546 V563 M1141.500 546 V563" stroke="#2e2e2e"/>
<text x="1044" y="559" textLength="28" lengthAdjust="spacingAndGlyphs" style="fill:#dedede">Layers</text>
<text x="1087" y="559" textLength="46" lengthAdjust="spacingAndGlyphs" class="i">Artboards</text>
<use href="#menu" x="1259" y="550"/>
<rect x="1042.500" y="569.500" width="229" height="126" fill="#535353" stroke="#333"/>
<path d="M1043 590.500 H1271 M1043 611.500 H1271 M1043 632.500 H1271 M1043 653.500 H1271 M1043 674.500 H1271" stroke="#3a3a3a"/>
<path d="M1063.500 570 V695 M1084.500 570 V695 M1236.500 570 V695" stroke="#3e3e3e"/>
<g fill="#4a6fc8"><rect x="1086" y="571" width="4" height="19"/><rect x="1086" y="592" width="4" height="19"/><rect x="1086" y="613" width="4" height="19"/><rect x="1086" y="634" width="4" height="19"/><rect x="1086" y="655" width="4" height="19"/><rect x="1086" y="676" width="4" height="19"/></g>
<use href="#eye" x="1052" y="579"/><use href="#eye" x="1052" y="600"/><use href="#eye" x="1052" y="621"/><use href="#eye" x="1052" y="642"/><use href="#eye" x="1052" y="663"/><use href="#eye" x="1052" y="684"/>
<use href="#lock" x="1074" y="622"/><use href="#lock" x="1074" y="643"/><use href="#lock" x="1074" y="664"/><use href="#lock" x="1074" y="685"/>
<path d="M1095 577 H1103 L1099 583 Z" fill="#d8d8d8"/>
<rect x="1112" y="571" width="18" height="18" fill="url(#gr)" stroke="#111"/><rect x="1113" y="581" width="16" height="2" fill="#2b5420"/><rect x="1113" y="583" width="16" height="3" fill="#33b000"/>
<rect x="1132" y="592" width="18" height="18" fill="#fff" stroke="#111"/><rect x="1133" y="601" width="16" height="2" fill="#33b000"/>
<rect x="1132" y="613" width="18" height="18" fill="#fff" stroke="#111"/><rect x="1133" y="621" width="16" height="2" fill="#2b5420"/>
<rect x="1132" y="634" width="18" height="18" fill="#fff" stroke="#111"/><path d="M1133 640 L1137 637 L1141 640 L1145 637 L1149 640 V647 H1133 Z" fill="#68bc5c"/>
<rect x="1132" y="655" width="18" height="18" fill="#fff" stroke="#111"/><rect x="1133" y="660" width="16" height="9" fill="#d8ead2"/>
<rect x="1132" y="676" width="18" height="18" fill="url(#gr)" stroke="#111"/>
<text x="1135" y="585" textLength="33" lengthAdjust="spacingAndGlyphs">Layer 1</text>
<text x="1156" y="606" textLength="33" lengthAdjust="spacingAndGlyphs">&lt;Path&gt;</text>
<text x="1156" y="627" textLength="33" lengthAdjust="spacingAndGlyphs">&lt;Path&gt;</text>
<text x="1156" y="648" textLength="33" lengthAdjust="spacingAndGlyphs">&lt;Path&gt;</text>
<text x="1156" y="669" textLength="33" lengthAdjust="spacingAndGlyphs">&lt;Path&gt;</text>
<text x="1155" y="690" textLength="13" lengthAdjust="spacingAndGlyphs">BG</text>
<use href="#tgt" x="1246.500" y="580.500"/><use href="#tgt" x="1246.500" y="601.500"/><use href="#tgt" x="1246.500" y="622.500"/><use href="#tgt" x="1246.500" y="643.500"/><circle cx="1246.500" cy="664.500" r="4" fill="#8a8a8a" stroke="#a2a2a2"/><use href="#tgt" x="1246.500" y="685.500"/>
<path d="M1266 570 H1271 V575 Z" fill="#d8d8d8"/>
<text x="1043" y="711" textLength="31" lengthAdjust="spacingAndGlyphs" style="fill:#d6d6d6">1 Layer</text>
<circle cx="1141" cy="704" r="4" fill="none" stroke="#6e6e6e"/><path d="M1138 707 L1134 712" stroke="#6e6e6e" stroke-width="1.400"/>
<rect x="1160.500" y="702.500" width="7" height="7" fill="none" stroke="#6e6e6e"/><rect x="1164" y="706" width="6" height="6" fill="#6e6e6e"/>
<rect x="1191" y="703" width="7" height="9" fill="#7a7a7a"/><path d="M1186 705 H1191 M1186 709 H1191" stroke="#7a7a7a"/>
<path d="M1213 702 H1222 V712 H1216 V707 H1213 Z" fill="#d0d0d0"/>
<path d="M1239 704 H1249 M1240 705 V713 H1248 V705 M1243 706 V712 M1245 706 V712" stroke="#6e6e6e" fill="none"/>
</svg>
</body></html>
